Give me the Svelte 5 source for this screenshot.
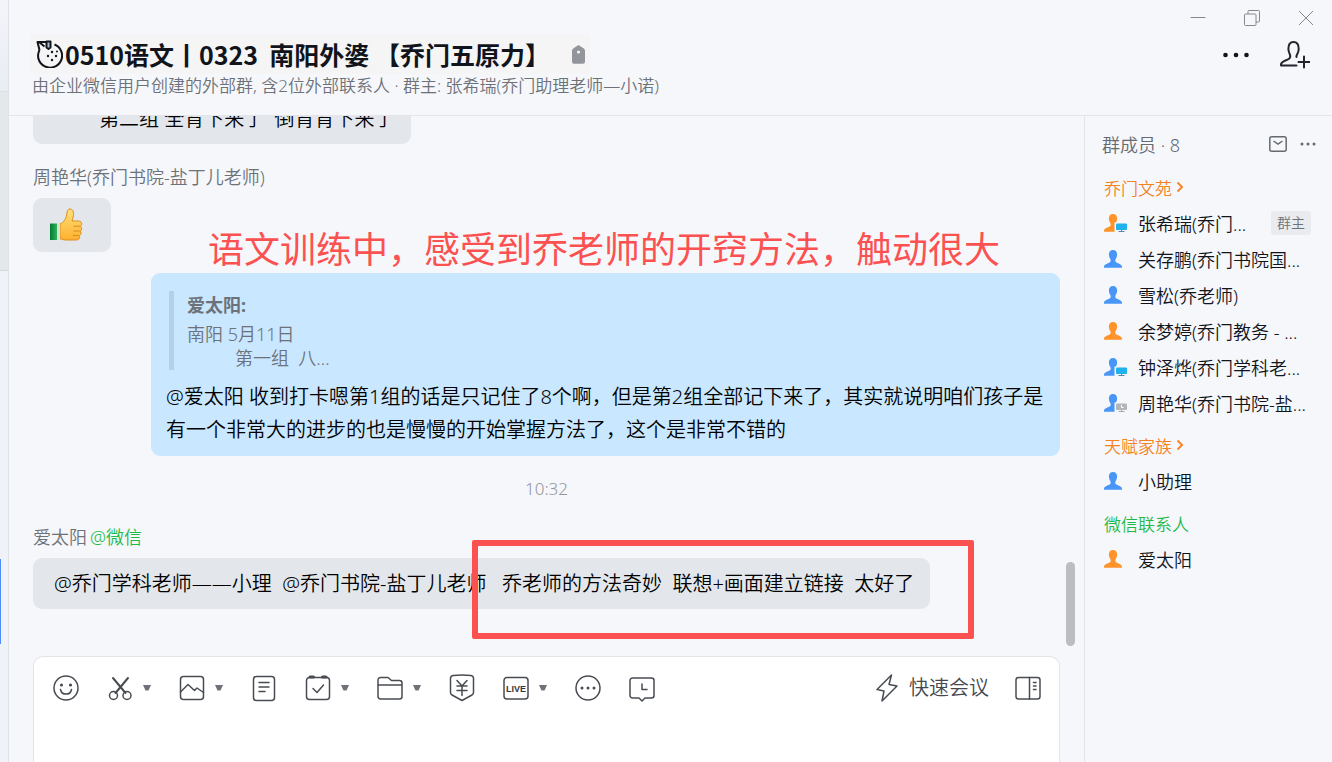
<script>
  const groups = [
    {
      name: '乔门文苑',
      kind: 'corp',
      members: [
        { name: '张希瑞(乔门...', color: 'orange', device: 'online', owner: true },
        { name: '关存鹏(乔门书院国...', color: 'blue' },
        { name: '雪松(乔老师)', color: 'blue' },
        { name: '余梦婷(乔门教务 - ...', color: 'orange' },
        { name: '钟泽烨(乔门学科老...', color: 'blue', device: 'online' },
        { name: '周艳华(乔门书院-盐...', color: 'blue', device: 'away' },
      ],
    },
    {
      name: '天赋家族',
      kind: 'corp',
      members: [{ name: '小助理', color: 'blue' }],
    },
    {
      name: '微信联系人',
      kind: 'wechat',
      members: [{ name: '爱太阳', color: 'orange' }],
    },
  ];

  const tools = [
    { id: 'emoji', label: '表情' },
    { id: 'cut', label: '截图', menu: true },
    { id: 'image', label: '图片', menu: true },
    { id: 'doc', label: '文档' },
    { id: 'todo', label: '待办', menu: true },
    { id: 'folder', label: '文件', menu: true },
    { id: 'pay', label: '红包' },
    { id: 'live', label: '直播', menu: true },
    { id: 'more', label: '更多' },
    { id: 'history', label: '聊天记录' },
  ];

  const PERSON_COLORS = {
    orange: '#ff9229',
    blue: '#4896f7',
  };

  let draft = $state('');
</script>

{#snippet toolIcon(id)}
  <svg class="line" width="26" height="28" viewBox="0 0 26 28">
    {#if id === 'emoji'}
      <circle cx="13" cy="14" r="12" />
      <circle class="dot" cx="8.5" cy="11" r="1.6" />
      <circle class="dot" cx="17.5" cy="11" r="1.6" />
      <path d="M7.5 15.5c.6 3 2.800 4.600 5.500 4.600s4.900-1.600 5.500-4.600" />
    {:else if id === 'cut'}
      <path d="M6 4l12.500 15M21 4L8.500 19" stroke-width="2" />
      <circle cx="6.500" cy="21.500" r="4" />
      <circle cx="20" cy="21.500" r="4" />
    {:else if id === 'image'}
      <rect x="1.500" y="2.500" width="23" height="23" rx="3" />
      <path d="M1.500 18l7.500-7.500 6.500 6 2.500-2.500 6.500 4.500" />
    {:else if id === 'doc'}
      <rect x="2.500" y="2.500" width="21" height="24" rx="3" />
      <path d="M8 8.500h10M8 13h10M8 17.500h6" />
    {:else if id === 'todo'}
      <rect x="1.500" y="3.500" width="23" height="22" rx="3" />
      <path d="M8 14.500l4 4 6.500-7.500" />
      <path d="M5 3h3.500M17.500 3H21" stroke-width="3" />
    {:else if id === 'folder'}
      <path d="M1 22.500V6a2.500 2.500 0 0 1 2.500-2.500H11l3.500 3h8A2.500 2.500 0 0 1 25 9v13.500a2.500 2.500 0 0 1-2.500 2.500h-19A2.500 2.500 0 0 1 1 22.500zM1 11h24" />
    {:else if id === 'pay'}
      <path d="M1.500 4.200C1.500 2.500 2.300 2 4 1.600c6-.9 12-.9 18 0 1.700.4 2.500.9 2.500 2.600v14.300c0 1.300-.4 1.900-1.500 2.500L13 26.500 3 21c-1.100-.6-1.500-1.200-1.500-2.500z" />
      <path d="M8 6.500l5 5.500 5-5.500M8 12h10M8 16.500h10M13 12v9.500" />
    {:else if id === 'live'}
      <rect x="1" y="3.500" width="24" height="21.500" rx="3" />
      <text x="13" y="18" text-anchor="middle">LIVE</text>
    {:else if id === 'more'}
      <circle cx="13" cy="14" r="12" />
      <circle class="dot" cx="7" cy="14" r="1.500" />
      <circle class="dot" cx="13" cy="14" r="1.500" />
      <circle class="dot" cx="19" cy="14" r="1.500" />
    {:else}
      <path d="M3.500 4h19A2.500 2.500 0 0 1 25 6.500v15a2.500 2.500 0 0 1-2.500 2.500H16l-3 3-3-3H3.500A2.500 2.500 0 0 1 1 21.500v-15A2.500 2.500 0 0 1 3.500 4z" />
      <path d="M13 10v5.500h5" />
    {/if}
  </svg>
{/snippet}

{#snippet person(member)}
  <svg class="person" width="24" height="18" viewBox="0 0 24 18">
    <path
      fill={PERSON_COLORS[member.color]}
      d="M9 0c2.600 0 4.100 1.800 4.100 4.600 0 2-.8 3.600-1.600 4.800-.5 1.100-.2 2.300.9 3 2.200 1.300 5.600 1.500 5.600 4.600v.7H0V17c0-3.100 3.400-3.300 5.600-4.600 1.100-.7 1.400-1.900.9-3-.8-1.200-1.600-2.800-1.600-4.800C4.900 1.800 6.400 0 9 0z"
    />
    {#if member.device}
      <path fill="#f5f7fb" d="M10.500 8.500H24V18H10.500z" />
      <rect x="12" y="9.500" width="11" height="6.500" rx="1" fill={member.device === 'online' ? '#1fb2ec' : '#b2b5ba'} />
      <path d="M17.500 16v1.300M14.500 17.500h6" stroke={member.device === 'online' ? '#5588b3' : '#a5a8ad'} />
      {#if member.device === 'away'}
        <path d="M17.500 11v2.500h2" stroke="#fff" fill="none" />
      {/if}
    {/if}
  </svg>
{/snippet}

<div class="window">
  <div class="rail">
    <div class="rail-top"></div>
    <div class="rail-active"></div>
    <div class="rail-rest"><span class="rail-mark"></span></div>
  </div>

  <main>
    <header>
      <div class="window-controls">
        <button aria-label="最小化">
          <svg width="16" height="16" viewBox="0 0 16 16"><path d="M0.500 7.500h15" /></svg>
        </button>
        <button aria-label="还原">
          <svg width="16" height="16" viewBox="0 0 16 16">
            <rect x="0.500" y="4" width="11.500" height="11.500" rx="1" />
            <path d="M4 4V1.500a1 1 0 0 1 1-1h9.500a1 1 0 0 1 1 1V11a1 1 0 0 1-1 1H12" />
          </svg>
        </button>
        <button aria-label="关闭">
          <svg width="16" height="16" viewBox="0 0 16 16"><path d="M1 1l14 14M15 1L1 15" /></svg>
        </button>
      </div>

      <div class="title-row">
        <div class="title-block">
          <div class="title">
            <svg class="logo" width="28" height="28" viewBox="0 0 28 28">
              <path d="M19.500 4.500a12 12 0 1 1-15 5.500" />
              <path d="M4.500 10L2.500 2h9M4 2l5.500 4.500" />
              <path d="M11.500 1.500h4v6l-2 1.500-2-1.500z" fill="#a9bdd4" />
              <g class="seeds">
                <circle cx="17" cy="12" r="1.200" />
                <circle cx="13" cy="16" r="1.200" />
                <circle cx="21" cy="16" r="1.200" />
                <circle cx="17" cy="20" r="1.200" />
                <circle cx="22" cy="11.500" r="1" />
              </g>
            </svg>
            <h1>0510语文丨0323&nbsp; 南阳外婆 【乔门五原力】</h1>
            <svg class="tag" width="13" height="19" viewBox="0 0 13 19">
              <path d="M6.500 0l5.300 3.600c.8.500 1.200 1.200 1.200 2.100v11a2 2 0 0 1-2 2H2a2 2 0 0 1-2-2v-11c0-.9.4-1.600 1.200-2.100z" fill="#92959b" />
              <circle cx="6.500" cy="7" r="1.600" fill="#f5f5f5" />
            </svg>
          </div>
          <p class="subtitle">由企业微信用户创建的外部群, 含2位外部联系人 · 群主: 张希瑞(乔门助理老师—小诺)</p>
        </div>
        <div class="title-actions">
          <button aria-label="更多">
            <svg width="28" height="28" viewBox="0 0 28 28" fill="#11141b">
              <circle cx="3.500" cy="14" r="2.300" />
              <circle cx="14" cy="14" r="2.300" />
              <circle cx="24.500" cy="14" r="2.300" />
            </svg>
          </button>
          <button aria-label="添加成员">
            <svg width="30" height="28" viewBox="0 0 30 28" fill="none" stroke="#22252b" stroke-width="2" stroke-linecap="round" stroke-linejoin="round">
              <path d="M16.500 16c-.3-1.300.4-2.200 1.200-3.800.6-1.300 1-2.600 1-4.400C18.700 3.500 16.800 1 13.500 1S8.400 3.500 8.400 7.800c0 1.800.4 3.100 1 4.400 1.200 2.400 1.500 4.600-1 6C5.500 19.700 1 20.500 1 23.500V24.500H16.500" />
              <path d="M24 15.500v11M18.500 21h11" />
            </svg>
          </button>
        </div>
      </div>
    </header>

    <div class="body">
      <section class="chat">
        <div class="messages">
          <div class="bubble clipped">第二组 全背下来了&nbsp; 倒背背下来了</div>

          <div class="message">
            <div class="sender">周艳华(乔门书院-盐丁儿老师)</div>
            <div class="bubble sticker">
              <svg width="34" height="34" viewBox="0 0 34 34" role="img" aria-label="赞">
                <defs>
                  <linearGradient id="skin" x1="0" y1="0" x2="0" y2="1">
                    <stop offset="0" stop-color="#ffe27a" />
                    <stop offset="1" stop-color="#fdb02e" />
                  </linearGradient>
                  <linearGradient id="cuff" x1="0" y1="0" x2="1" y2="0">
                    <stop offset="0" stop-color="#047a35" />
                    <stop offset="1" stop-color="#2fb257" />
                  </linearGradient>
                </defs>
                <path d="M11 16c4-1.500 6.500-6 7-11 .2-2.800 1.300-4 3-4 2.500 0 3.700 2.200 3.500 5.500-.1 2.500-.8 4.500-1.500 6.500h6.500c2 0 3.200 1.200 3.200 2.800 0 1.300-.6 2-1.300 2.400.9.500 1.400 1.300 1.300 2.500-.1 1.200-.7 2-1.500 2.400.6.600.9 1.300.8 2.300-.2 1.300-.9 2-1.800 2.300.4.700.6 1.300.4 2.100-.4 1.500-1.700 2.200-3.600 2.200H17c-2.500 0-4-.8-6-1.300z" fill="url(#skin)" stroke="#de8d22" />
                <path d="M24.500 18.200h6.500M24.500 23h6.300M24 27.500h5.500" stroke="#d98a20" fill="none" />
                <path d="M1 15.500h7V32H1z" fill="url(#cuff)" />
                <path d="M8 15.500h3V32H8z" fill="#cfe9d2" />
              </svg>
            </div>
          </div>

          <div class="message own">
            <div class="note">语文训练中，感受到乔老师的开窍方法，触动很大</div>
            <div class="bubble mine">
              <blockquote>
                <strong>爱太阳:</strong>
                <span>南阳 5月11日</span>
                <span class="indent">第一组&nbsp; 八...</span>
              </blockquote>
              <p>@爱太阳 收到打卡嗯第1组的话是只记住了8个啊，但是第2组全部记下来了，其实就说明咱们孩子是<br />有一个非常大的进步的也是慢慢的开始掌握方法了，这个是非常不错的</p>
            </div>
          </div>

          <time>10:32</time>

          <div class="message">
            <div class="sender">爱太阳<span class="wechat">@微信</span></div>
            <div class="bubble reply">@乔门学科老师——小理&nbsp; @乔门书院-盐丁儿老师&nbsp;&nbsp; 乔老师的方法奇妙&nbsp; 联想+画面建立链接&nbsp; 太好了</div>
            <div class="highlight"></div>
          </div>

          <div class="scroll-thumb"></div>
        </div>

        <div class="composer">
          <div class="toolbar">
            {#each tools as tool (tool.id)}
              <button aria-label={tool.label}>
                {@render toolIcon(tool.id)}
                {#if tool.menu}
                  <svg width="8" height="6" viewBox="0 0 8 6"><path d="M0 0h8L5.500 5.500h-3z" fill="#6e7278" /></svg>
                {/if}
              </button>
            {/each}
            <div class="toolbar-right">
              <button class="meeting">
                <svg class="line" width="24" height="28" viewBox="0 0 24 28">
                  <path d="M16.500 1L2 15.500l7 1.500-2 10L22 12l-8-1.500z" />
                </svg>
                快速会议
              </button>
              <button aria-label="侧边栏">
                <svg class="line" width="26" height="28" viewBox="0 0 26 28">
                  <rect x="1" y="3.500" width="24" height="21.500" rx="2.500" />
                  <path d="M14.500 3.500V25M18.500 8.500h2.500M18.500 12h2.500M18.500 15.500h2.500" />
                </svg>
              </button>
            </div>
          </div>
          <textarea aria-label="输入消息" bind:value={draft}></textarea>
        </div>
      </section>

      <aside>
        <div class="aside-head">
          <span>群成员 · 8</span>
          <div class="aside-actions">
            <button aria-label="群消息">
              <svg width="18" height="16" viewBox="0 0 18 16" fill="none" stroke="#656a71" stroke-width="1.500">
                <rect x="0.800" y="0.800" width="16.400" height="14.400" rx="2" />
                <path d="M4.500 5l4.500 3 4.500-3" />
              </svg>
            </button>
            <button aria-label="更多成员操作">
              <svg width="16" height="16" viewBox="0 0 16 16" fill="#656a71">
                <circle cx="2" cy="8" r="1.500" />
                <circle cx="8" cy="8" r="1.500" />
                <circle cx="14" cy="8" r="1.500" />
              </svg>
            </button>
          </div>
        </div>
        {#each groups as group (group.name)}
          <div class="group">
            <h2 class={group.kind}>
              {group.name}
              {#if group.kind === 'corp'}
                <svg width="8" height="12" viewBox="0 0 8 12"><path d="M1.500 1.500L6 6l-4.500 4.500" fill="none" stroke="#fb8332" stroke-width="2" /></svg>
              {/if}
            </h2>
            <ul>
              {#each group.members as member (member.name)}
                <li>
                  {@render person(member)}
                  <span class="name">{member.name}</span>
                  {#if member.owner}
                    <span class="owner">群主</span>
                  {/if}
                </li>
              {/each}
            </ul>
          </div>
        {/each}
      </aside>
    </div>
  </main>
</div>

<style>
  :global(body) {
    margin: 0;
    background: #f5f7fb;
  }

  .window {
    display: flex;
    height: 100vh;
    overflow: hidden;
    background: #f5f7fb;
    color: #11141b;
    font-family: 'Noto Sans', 'Noto Sans CJK SC', sans-serif;
    font-weight: 350;
  }

  button {
    display: flex;
    align-items: center;
    padding: 0;
    border: 0;
    background: none;
    color: inherit;
    font: inherit;
    cursor: pointer;
  }

  h1, h2, p, ul, blockquote {
    margin: 0;
    padding: 0;
  }

  .rail {
    display: flex;
    flex-direction: column;
    width: 8px;
    flex-shrink: 0;
    border-right: 1px solid #dfe2e6;
    background: #eff3f9;
  }

  .rail-top {
    height: 91px;
    background: linear-gradient(#f2f4f9, #e9edf4);
  }

  .rail-active {
    height: 178px;
    border-top: 1px solid #dce0e4;
    border-bottom: 1px solid #d3d8dc;
    background: #e3e8eb;
  }

  .rail-rest {
    padding-top: 288px;
  }

  .rail-mark {
    display: block;
    width: 1px;
    height: 85px;
    background: #4d8dff;
  }

  main {
    display: flex;
    flex: 1;
    flex-direction: column;
    min-width: 0;
  }

  header {
    flex-shrink: 0;
    padding: 1px 18px 17px 21px;
    border-bottom: 1px solid #e3e5e9;
  }

  .window-controls {
    display: flex;
    justify-content: flex-end;
    align-items: center;
    gap: 38px;
    height: 33px;
  }

  .window-controls svg {
    fill: none;
    stroke: #85888e;
  }

  .title-row {
    display: flex;
    justify-content: space-between;
  }

  .title {
    display: flex;
    align-items: center;
    width: fit-content;
    height: 40px;
    padding: 0 5px;
    background: #f5f5f5;
  }

  .logo {
    margin-right: 2px;
    fill: none;
    stroke: #11141b;
    stroke-width: 2;
    stroke-linejoin: round;
  }

  .logo .seeds {
    fill: #11141b;
    stroke: none;
  }

  h1 {
    font-family: 'Noto Sans CJK SC', sans-serif;
    font-size: 25px;
    font-weight: 700;
    line-height: 38px;
    white-space: nowrap;
  }

  .tag {
    margin-left: 22px;
  }

  .subtitle {
    padding-left: 2px;
    color: #6d7178;
    font-size: 17px;
    line-height: 24px;
    white-space: nowrap;
  }

  .title-actions {
    display: flex;
    align-items: center;
    gap: 30px;
    height: 42px;
    padding-right: 4px;
  }

  .body {
    display: flex;
    flex: 1;
    min-height: 0;
  }

  .chat {
    display: flex;
    flex: 1;
    flex-direction: column;
    min-width: 0;
  }

  .messages {
    position: relative;
    display: flex;
    flex: 1;
    flex-direction: column;
    justify-content: flex-end;
    align-items: flex-start;
    gap: 21px;
    min-height: 0;
    padding: 0 24px 47px;
    overflow: hidden;
  }

  .message {
    position: relative;
    max-width: 100%;
  }

  .sender {
    margin-bottom: 9px;
    color: #6d7178;
    font-size: 18px;
    line-height: 24px;
  }

  .wechat {
    color: #1dba49;
  }

  .sender .wechat {
    margin-left: 3px;
  }

  .bubble {
    width: fit-content;
    padding: 9px 16px 9px 21px;
    border-radius: 9px;
    background: #e3e7eb;
    color: #000;
    font-size: 20px;
    line-height: 33px;
  }

  .clipped {
    flex-shrink: 0;
    padding-left: 66px;
  }

  .sticker {
    display: flex;
    padding: 10px 28px 10px 16px;
  }

  .own {
    align-self: stretch;
    padding-left: 118px;
  }

  .mine {
    box-sizing: border-box;
    width: 100%;
    padding: 18px 12px 10px 15px;
    background: #c9e7ff;
  }

  .mine p {
    margin-top: 10px;
  }

  blockquote {
    display: flex;
    flex-direction: column;
    margin-left: 3px;
    padding-left: 18px;
    background: linear-gradient(#b5d0ea, #b5d0ea) left / 5px 100% no-repeat;
    color: #6d7178;
    font-size: 18px;
    line-height: 24px;
  }

  blockquote strong {
    padding-bottom: 3px;
    font-weight: 700;
    line-height: 28px;
  }

  .indent {
    padding-left: 48px;
  }

  .note {
    position: absolute;
    bottom: 100%;
    left: 175px;
    margin-bottom: -3px;
    color: #fc5151;
    font-size: 36px;
    font-weight: 400;
    line-height: 52px;
    white-space: nowrap;
  }

  time {
    align-self: center;
    margin-bottom: 3px;
    color: #92959b;
    font-size: 17px;
    line-height: 24px;
  }

  .reply {
    white-space: nowrap;
  }

  .highlight {
    position: absolute;
    top: 15px;
    left: 439px;
    width: 490px;
    height: 87px;
    border: 6px solid #fc5151;
    border-radius: 2px;
  }

  .scroll-thumb {
    position: absolute;
    right: 9px;
    bottom: 10px;
    width: 9px;
    height: 84px;
    border-radius: 5px;
    background: #babdc1;
  }

  .composer {
    display: flex;
    flex-direction: column;
    height: 105px;
    margin: 0 24px;
    border: 1px solid #e2e4e8;
    border-bottom: 0;
    border-radius: 10px 10px 0 0;
    background: #fff;
  }

  .toolbar {
    display: flex;
    align-items: center;
    gap: 28px;
    padding: 17px 18px 0 19px;
    color: #45494f;
  }

  .toolbar button {
    gap: 10px;
  }

  .toolbar-right {
    display: flex;
    align-items: center;
    gap: 26px;
    margin-left: auto;
  }

  .meeting {
    font-size: 20px;
    line-height: 28px;
    white-space: nowrap;
  }

  .line {
    fill: none;
    stroke: #484c52;
    stroke-width: 1.5;
    stroke-linecap: round;
    stroke-linejoin: round;
  }

  .line .dot {
    fill: #484c52;
    stroke: none;
  }

  .line text {
    fill: #34383e;
    stroke: none;
    font-family: 'Liberation Sans', sans-serif;
    font-size: 9px;
    font-weight: 700;
  }

  textarea {
    flex: 1;
    margin: 8px 18px 0;
    padding: 0;
    border: 0;
    outline: 0;
    background: none;
    font: inherit;
    font-size: 20px;
    resize: none;
  }

  aside {
    box-sizing: border-box;
    width: 248px;
    flex-shrink: 0;
    padding: 12px 16px 0 17px;
    border-left: 1px solid #e3e5e9;
  }

  .aside-head {
    display: flex;
    justify-content: space-between;
    align-items: center;
    height: 32px;
    margin-bottom: 9px;
    color: #656a71;
    font-size: 18px;
  }

  .aside-actions {
    display: flex;
    gap: 13px;
  }

  .group {
    margin-bottom: 6px;
    padding-left: 2px;
  }

  h2 {
    display: flex;
    align-items: center;
    gap: 4px;
    height: 36px;
    font-size: 17px;
    font-weight: inherit;
  }

  h2.corp {
    color: #f58220;
  }

  h2.wechat {
    color: #1dba49;
  }

  li {
    display: flex;
    align-items: center;
    height: 36px;
    font-size: 18px;
    white-space: nowrap;
  }

  .person {
    margin-right: 10px;
  }

  .owner {
    margin-left: auto;
    margin-right: 5px;
    padding: 0 6px;
    border-radius: 3px;
    background: #e9ebef;
    color: #6d7178;
    font-size: 14px;
    line-height: 24px;
  }
</style>
